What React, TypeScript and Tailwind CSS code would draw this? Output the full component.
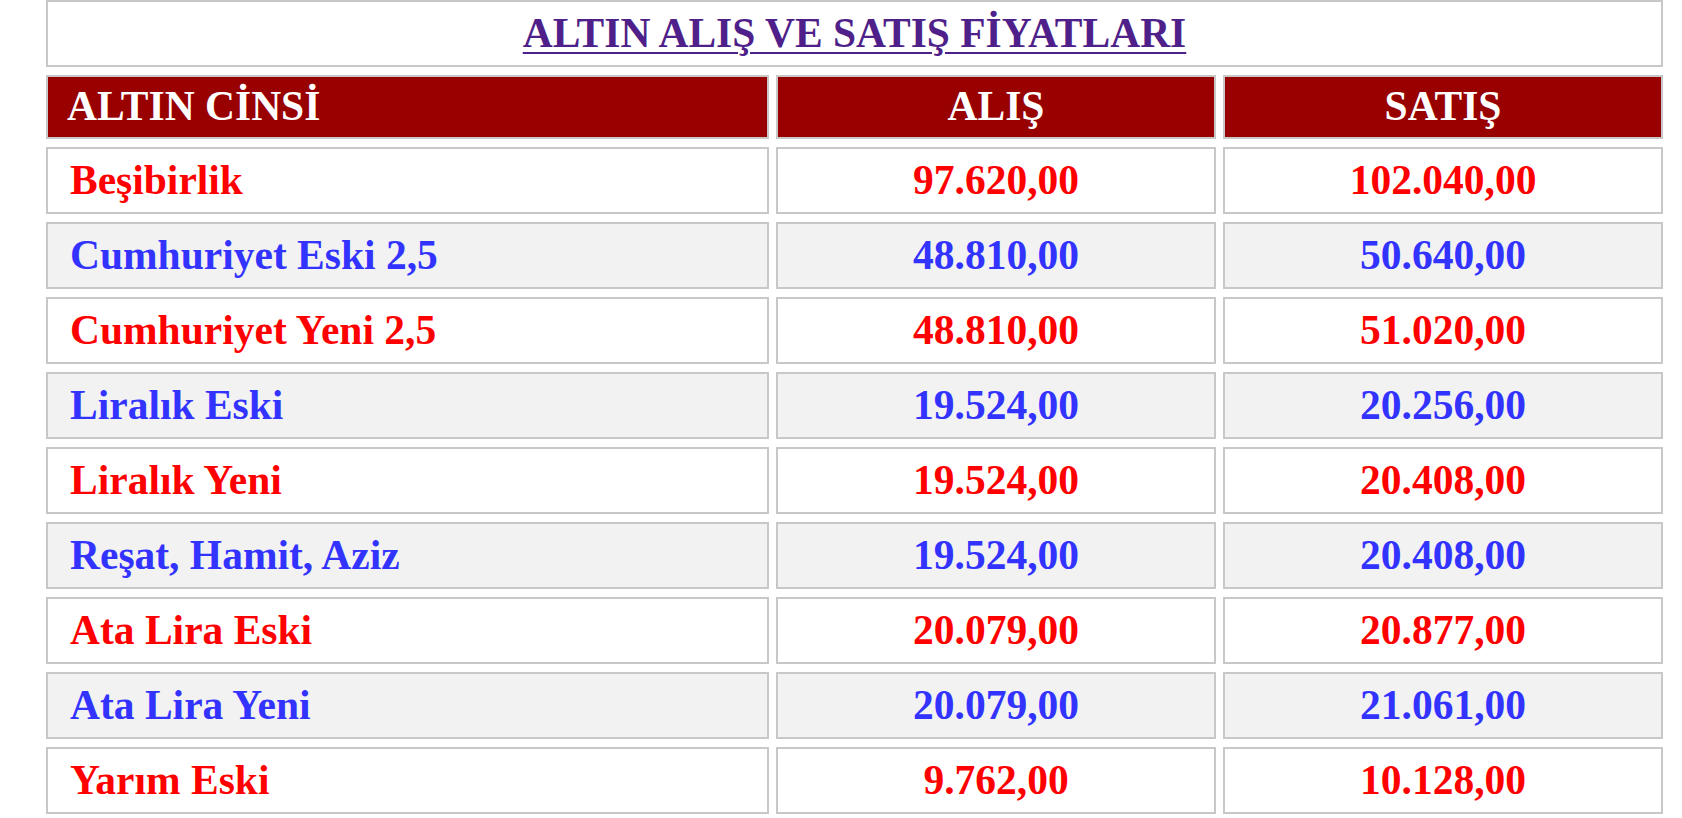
const rows = [
  { name: 'Beşibirlik', alis: '97.620,00', satis: '102.040,00' },
  { name: 'Cumhuriyet Eski 2,5', alis: '48.810,00', satis: '50.640,00' },
  { name: 'Cumhuriyet Yeni 2,5', alis: '48.810,00', satis: '51.020,00' },
  { name: 'Liralık Eski', alis: '19.524,00', satis: '20.256,00' },
  { name: 'Liralık Yeni', alis: '19.524,00', satis: '20.408,00' },
  { name: 'Reşat, Hamit, Aziz', alis: '19.524,00', satis: '20.408,00' },
  { name: 'Ata Lira Eski', alis: '20.079,00', satis: '20.877,00' },
  { name: 'Ata Lira Yeni', alis: '20.079,00', satis: '21.061,00' },
  { name: 'Yarım Eski', alis: '9.762,00', satis: '10.128,00' },
];

export default function App() {
  return (
    <div className="w-[1682px] h-[818px] overflow-hidden bg-white font-['Liberation_Serif','Times_New_Roman',serif] font-bold text-[41.5px]">
      <div className="ml-[46px] w-[1617px] flex flex-col gap-[8px]">
        {/* Title */}
        <div className="h-[67px] border-2 border-[#c8c8c8] bg-white flex items-center justify-center">
          <a href="#" className="text-[#4f1f8a] underline decoration-2 underline-offset-[5px] leading-none">
            ALTIN ALIŞ VE SATIŞ FİYATLARI
          </a>
        </div>

        {/* Header */}
        <div className="grid grid-cols-[723px_440px_440px] gap-x-[7px]">
          <div className="h-[64px] border-2 border-[#c8c8c8] bg-[#990000] text-white flex items-center pl-[19px] leading-none">
            ALTIN CİNSİ
          </div>
          <div className="h-[64px] border-2 border-[#c8c8c8] bg-[#990000] text-white flex items-center justify-center leading-none">
            ALIŞ
          </div>
          <div className="h-[64px] border-2 border-[#c8c8c8] bg-[#990000] text-white flex items-center justify-center leading-none">
            SATIŞ
          </div>
        </div>

        {/* Rows */}
        {rows.map((r, i) => {
          const even = i % 2 === 1;
          const text = even ? 'text-[#3333ff]' : 'text-[#ff0000]';
          const bg = even ? 'bg-[#f2f2f2]' : 'bg-white';
          return (
            <div key={r.name} className={`grid grid-cols-[723px_440px_440px] gap-x-[7px] ${text}`}>
              <div className={`h-[67px] border-2 border-[#c8c8c8] ${bg} flex items-center pl-[22px] leading-none`}>
                {r.name}
              </div>
              <div className={`h-[67px] border-2 border-[#c8c8c8] ${bg} flex items-center justify-center leading-none`}>
                {r.alis}
              </div>
              <div className={`h-[67px] border-2 border-[#c8c8c8] ${bg} flex items-center justify-center leading-none`}>
                {r.satis}
              </div>
            </div>
          );
        })}
      </div>
    </div>
  );
}
